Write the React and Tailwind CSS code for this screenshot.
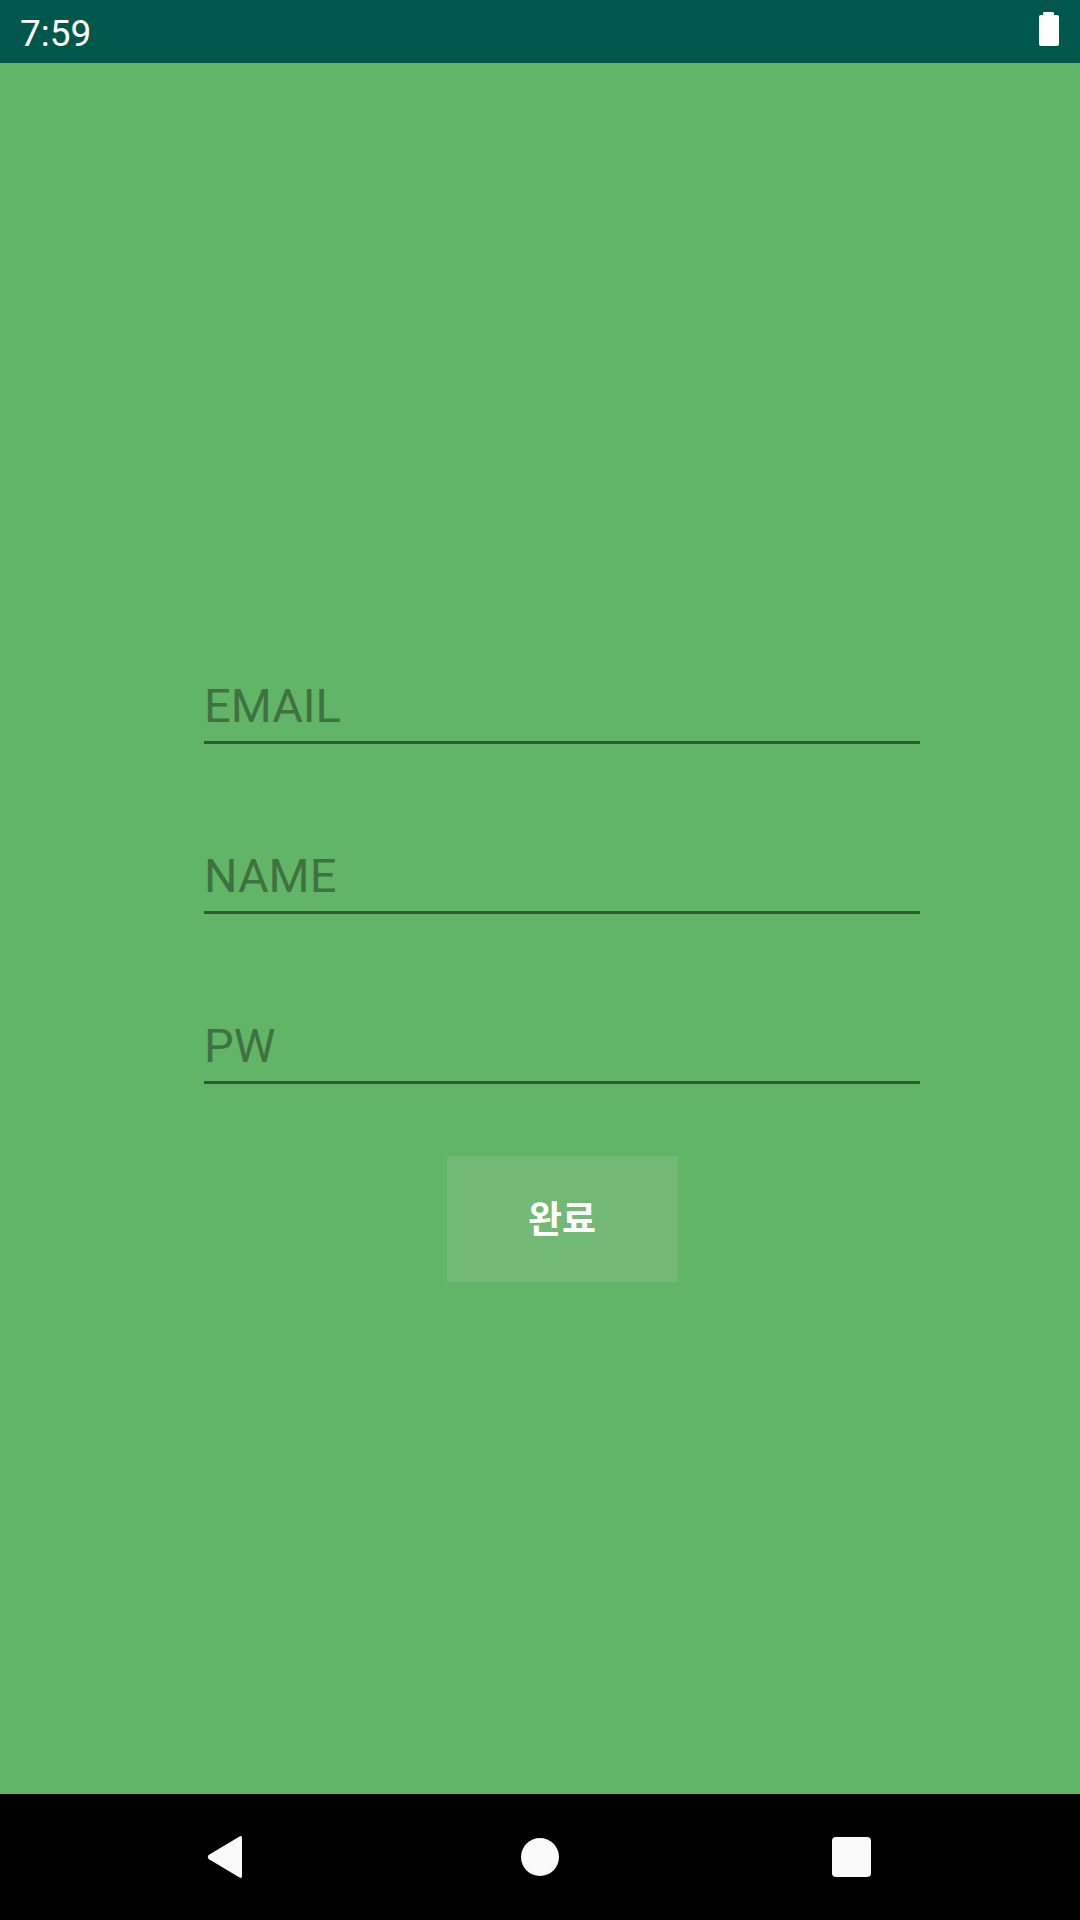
import React from "react";

const fields = ["EMAIL", "NAME", "PW"];

function Battery() {
  return (
    <svg width="22" height="36" viewBox="0 0 22 36" className="block">
      <rect x="5" y="0" width="11" height="4" rx="1" fill="#ffffff" />
      <rect x="1" y="3" width="20" height="31" rx="2" fill="#ffffff" />
    </svg>
  );
}

function NavBar() {
  return (
    <div className="flex h-[126px] w-full items-center bg-black">
      <svg width="38" height="44" viewBox="0 0 38 44" className="ml-[206px] block">
        <path d="M36 3 L36 41 Q36 44 33.5 42.6 L3 24.2 Q0.5 22 3 19.8 L33.5 1.4 Q36 0 36 3 Z" fill="#fafafa" />
      </svg>
      <div className="ml-[277px] h-[38px] w-[38px] rounded-full bg-[#fafafa]" />
      <div className="ml-[273px] h-[40px] w-[39px] rounded-[4px] bg-[#fafafa]" />
    </div>
  );
}

function Field({ label }) {
  return (
    <div className="w-full">
      <div className="text-[47px] leading-[55px] text-[#3e7341]">{label}</div>
      <div className="mt-[8px] h-[3px] w-full bg-[#2f5b32]" />
    </div>
  );
}

export default function App() {
  return (
    <div className="flex h-[1920px] w-[1080px] flex-col bg-[#62b566] font-['Roboto','Noto_Sans_CJK_KR',sans-serif]">
      {/* status bar */}
      <div className="flex h-[63px] items-start justify-between bg-[#00574b] pl-[20px] pr-[20px]">
        <span className="block pt-[12px] text-[37px] leading-[43px] text-white">7:59</span>
        <div className="pt-[12px]">
          <Battery />
        </div>
      </div>

      <div className="flex flex-1 flex-col">
        <div className="ml-[204px] mt-[615px] flex w-[716px] flex-col items-center">
          <div className="flex w-full flex-col gap-[104px]">
            {fields.map((f) => (
              <Field key={f} label={f} />
            ))}
          </div>
          <button className="mt-[72px] flex h-[126px] w-[231px] items-center justify-center bg-[#71b975] pt-[4px] font-['Roboto','Noto_Sans_CJK_KR',sans-serif] text-[37px] font-bold text-white">
            완료
          </button>
        </div>
      </div>

      <NavBar />
    </div>
  );
}
